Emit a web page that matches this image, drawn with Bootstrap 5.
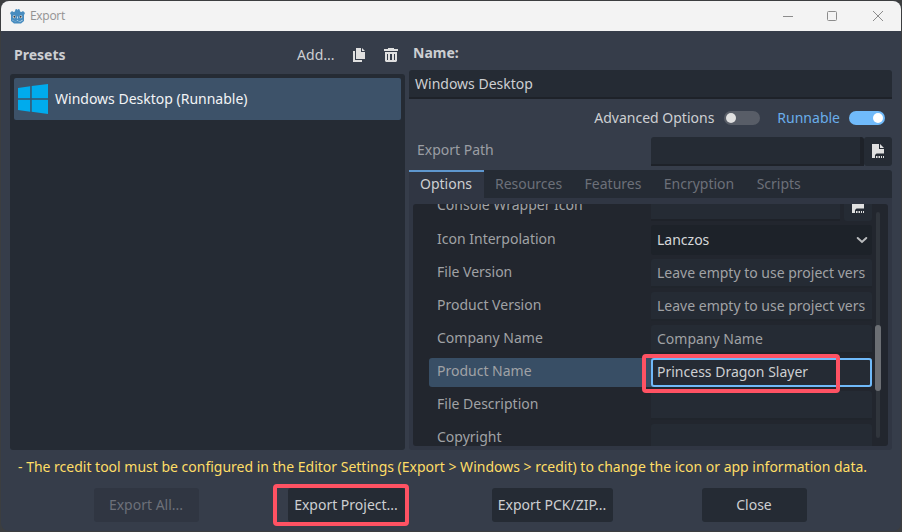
<!DOCTYPE html>
<html lang="en" data-bs-theme="dark">
<head>
<meta charset="utf-8">
<meta name="viewport" content="width=device-width, initial-scale=1">
<title>Export</title>
<link href="https://cdn.jsdelivr.net/npm/bootstrap@5.3.0/dist/css/bootstrap.min.css" rel="stylesheet">
<style>
body{background:#3c3e40;width:902px;height:532px;overflow:hidden;padding:1px;font:14px/20px "Noto Sans",sans-serif;color:#cdcfd2}
.win{width:900px;height:530px;border-radius:8px;overflow:hidden;background:#363d4a}
.titlebar{height:30px;background:#f3f3f3;color:#929292;padding-left:9px;font:12px/30px "Open Sans",sans-serif}
.titlebar svg{display:block}
.titlebar .cap{margin-left:5px;letter-spacing:-.3px}
.ctl{width:46px;height:30px;display:flex;align-items:center;justify-content:center}
.main-area{height:419px;padding:0 9px;gap:4px}
.left-col{width:395px}
.left-head{height:43px;padding:4px 6px 0 4px}
.add-lbl{margin-right:16.500px}
.tree{height:376px;background:#252b34;border-radius:3px;padding:4px}
.preset{height:42px;background:#3d5269;border-radius:2px;padding-left:4px;gap:7px;color:#f2f4f6}
.right-col{width:483px}
.field{background:#252b34;border:0;border-bottom:2px solid #1e2229;border-radius:3px 3px 0 0;color:#cdcfd2;height:29px;padding:0 6px;font-size:14px;line-height:27px;white-space:nowrap;overflow:hidden}
.name-lbl{height:39px;padding:12px 0 0 4px}
.checks{height:38px;padding-right:7px}
.switch{width:36px;height:14px;border-radius:7px;background:#585d67;padding:2px;margin-left:10px}
.switch i{display:block;width:10px;height:10px;border-radius:50%;background:#e0e0e0}
.switch.on{background:#70bafa;margin-left:9px}.switch.on i{background:#fff;margin-left:22px}
.run-lbl{margin-left:17px;color:#6aaeea}
.path-row{height:29px;margin-bottom:4px}
.path-lbl{color:#9b9ea4;padding:3px 0 0 8px}
.file-btn{width:28px;height:29px;background:#252b34;border-radius:3px;display:flex;align-items:center;justify-content:center;padding-bottom:1px}
.tabs{height:28px;background:#252b34;border-radius:0 3px 0 0;--bs-nav-link-font-size:14px}
.tabs .nav-link{padding:4px 11.200px 0 11.200px;height:28px;line-height:20px;color:#6c7079;border-radius:0}
.tabs .nav-link.active{background:#303643;color:#cdcfd2;border-top:2px solid #5e97cf;padding:2px 11.700px 0 11px}
.panel{height:252px;background:#303643;padding:6px 4px 4px;border-radius:0 0 3px 3px}
.inspector{height:242px;background:#22262e;border-radius:3px;overflow:hidden;padding:0 7px 0 16px}
.props{width:443px;margin-top:-12px;gap:4px}
.prop{height:29px;flex:none;border-radius:3px;color:#a0a2a5}
.prop:first-child{height:30px}
.prop .lbl{width:222px;padding:3px 8px 0;flex:none}
.prop .val{width:221px;color:#a0a2a5;flex:none}
.prop .ro{border-bottom-color:#20252c}
.prop.sel{background:#384e65}
.prop.sel .val{border:2px solid #70bafa;border-radius:3px;padding:0 4px;line-height:23px;color:#cdcfd2}
.drop{background:#1d2229;border-radius:3px;height:30px;margin-top:-1px;padding:0 4px 0 6px;color:#d6d8da!important}
.track{width:4px;height:226px;margin-top:8px;border-radius:2px;background:#30353c}
.thumb{position:relative;left:-1px;width:6px;height:66px;top:113px;border-radius:3px;background:#6c6f74}
.warn{height:38px;padding:7px 0 0 17px;color:#ffde66;white-space:nowrap;letter-spacing:-.005px}
.foot{padding-left:93px}
.gbtn{height:34px;background:#252b34;border:0;border-radius:3px;color:#cdcfd2;font-size:14px;line-height:20px;padding:0 1px 0 0;white-space:nowrap}
.gbtn:disabled{background:#303642;color:#6c7079;opacity:1}
.ring{position:absolute;border:4px solid #ff5263;border-radius:4px}
</style>
</head>
<body>
<svg width="0" height="0" class="position-absolute"><symbol id="file" viewBox="0 0 16 16"><path d="M2 1h7v5h5v4.500H6.500L5 12v3H2zM10 1l4 4h-4zM6 13h1.500v2H6zM8.500 13H10v2H8.500zM11 13h1v2h-1zM13 13h1v2h-1z" fill="#e0e0e0"/></symbol></svg>
<div class="win">
 <div class="titlebar d-flex align-items-center">
  <svg width="15" height="15" viewBox="0 0 15 15"><path d="M0 4L2 2l1.500 1L5 2.500 5.300.5 7 0l.5 1.500L8 0l1.700.5.300 2 1.500.5L13 2l2 2-1 2v6l-3 2.500H4L1 12V6z" fill="#478cbf"/><circle cx="4.200" cy="7.800" r="1.500" fill="#e5eef5"/><circle cx="10.800" cy="7.800" r="1.500" fill="#e5eef5"/><circle cx="4.400" cy="7.800" r="1" fill="#414042"/><circle cx="10.600" cy="7.800" r="1" fill="#414042"/><path d="M7 7.500h1v2H7zM2 10.800l2 .4.500 1h2l.5-1h1l.5 1h2l.5-1 2-.4v.5l-1.500.5-.5 1H9L8 12H7l-1 .6H4.500l-.5-1-2-.4z" fill="#c5dcec"/></svg>
  <span class="cap flex-grow-1">Export</span>
  <span class="ctl ps-1"><svg width="10" height="10"><path d="M0 5.500h10" stroke="#8c8c8c"/></svg></span>
  <span class="ctl"><svg width="10" height="10"><rect x=".5" y=".5" width="9" height="9" rx="1" fill="none" stroke="#8c8c8c"/></svg></span>
  <span class="ctl"><svg width="10" height="10"><path d="M0 0l10 10M10 0L0 10" stroke="#8c8c8c"/></svg></span>
 </div>
 <div class="main-area d-flex">
  <div class="left-col">
   <div class="left-head d-flex align-items-center">
    <strong class="flex-grow-1">Presets</strong>
    <span class="add-lbl">Add...</span>
    <svg width="16" height="16" viewBox="0 0 16 16" fill="#e0e0e0"><path d="M5 1h5v4h4v7H5zM11 1l3 3h-3zM2 4h2v9h7v2H2z"/></svg>
    <svg class="ms-3" width="16" height="16" viewBox="0 0 16 16"><path d="M5 1h6v1h4v2H1V2h4zM2 5h12v9l-1 1H3l-1-1z" fill="#e0e0e0"/><path d="M4 7h1v6H4zM7 7h2v6H7zM11 7h1v6h-1z" fill="#363d4a"/></svg>
   </div>
   <div class="tree">
    <div class="preset d-flex align-items-center">
     <svg width="30" height="30" viewBox="0 0 30 30" fill="#00abed"><path d="M0 4l12.200-1.700v12H0zM13.700 2.100L30 0v14.300H13.700zM0 15.700h12.200v12L0 26zM13.700 15.700H30V30l-16.300-2.200z"/></svg>
     <span>Windows Desktop (Runnable)</span>
    </div>
   </div>
  </div>
  <div class="right-col">
   <div class="name-lbl"><strong>Name:</strong></div>
   <div class="field">Windows Desktop</div>
   <div class="checks d-flex align-items-center justify-content-end">
    <span>Advanced Options</span><span class="switch"><i></i></span>
    <span class="run-lbl">Runnable</span><span class="switch on"><i></i></span>
   </div>
   <div class="path-row d-flex">
    <span class="path-lbl flex-grow-1">Export Path</span>
    <div class="field" style="width:213px;border-right:4px solid #1e2229"></div>
    <div class="file-btn"><svg width="16" height="16"><use href="#file"/></svg></div>
   </div>
   <nav class="nav tabs flex-nowrap">
    <a class="nav-link active">Options</a><a class="nav-link">Resources</a><a class="nav-link">Features</a><a class="nav-link">Encryption</a><a class="nav-link">Scripts</a>
   </nav>
   <div class="panel">
    <div class="inspector d-flex">
     <div class="props d-flex flex-column flex-shrink-0">
      <div class="prop d-flex"><span class="lbl">Console Wrapper Icon</span><span class="field" style="width:189px"></span><span class="file-btn" style="margin-left:4px"><svg width="16" height="16"><use href="#file"/></svg></span></div>
      <div class="prop d-flex"><span class="lbl">Icon Interpolation</span><span class="val drop d-flex align-items-center"><span class="flex-grow-1">Lanczos</span><svg width="12" height="12" viewBox="0 0 12 12"><path d="M1.700 4L6 8l4.300-4" fill="none" stroke="#b9bbbd" stroke-width="2" stroke-linecap="round"/></svg></span></div>
      <div class="prop d-flex"><span class="lbl">File Version</span><span class="val field ro">Leave empty to use project vers</span></div>
      <div class="prop d-flex"><span class="lbl">Product Version</span><span class="val field ro">Leave empty to use project vers</span></div>
      <div class="prop d-flex"><span class="lbl">Company Name</span><span class="val field ro">Company Name</span></div>
      <div class="prop sel d-flex"><span class="lbl">Product Name</span><span class="val field">Princess Dragon Slayer</span></div>
      <div class="prop d-flex"><span class="lbl">File Description</span><span class="val field ro"></span></div>
      <div class="prop d-flex"><span class="lbl">Copyright</span><span class="val field ro"></span></div>
     </div>
     <div class="track ms-1"><div class="thumb"></div></div>
    </div>
   </div>
  </div>
 </div>
 <div class="warn">- The rcedit tool must be configured in the Editor Settings (Export &gt; Windows &gt; rcedit) to change the icon or app information data.</div>
 <div class="foot d-flex">
  <button class="btn gbtn" disabled style="width:105px">Export All...</button>
  <button class="btn gbtn" style="width:117px;margin-left:89px">Export Project...</button>
  <button class="btn gbtn" style="width:121px;margin-left:87px">Export PCK/ZIP...</button>
  <button class="btn gbtn" style="width:105px;margin-left:89px">Close</button>
 </div>
</div>
<div class="ring" style="left:642px;top:354px;width:198px;height:39px"></div>
<div class="ring" style="left:273px;top:484px;width:136px;height:42px"></div>
<script src="https://cdn.jsdelivr.net/npm/bootstrap@5.3.0/dist/js/bootstrap.bundle.min.js"></script>
</body>
</html>
